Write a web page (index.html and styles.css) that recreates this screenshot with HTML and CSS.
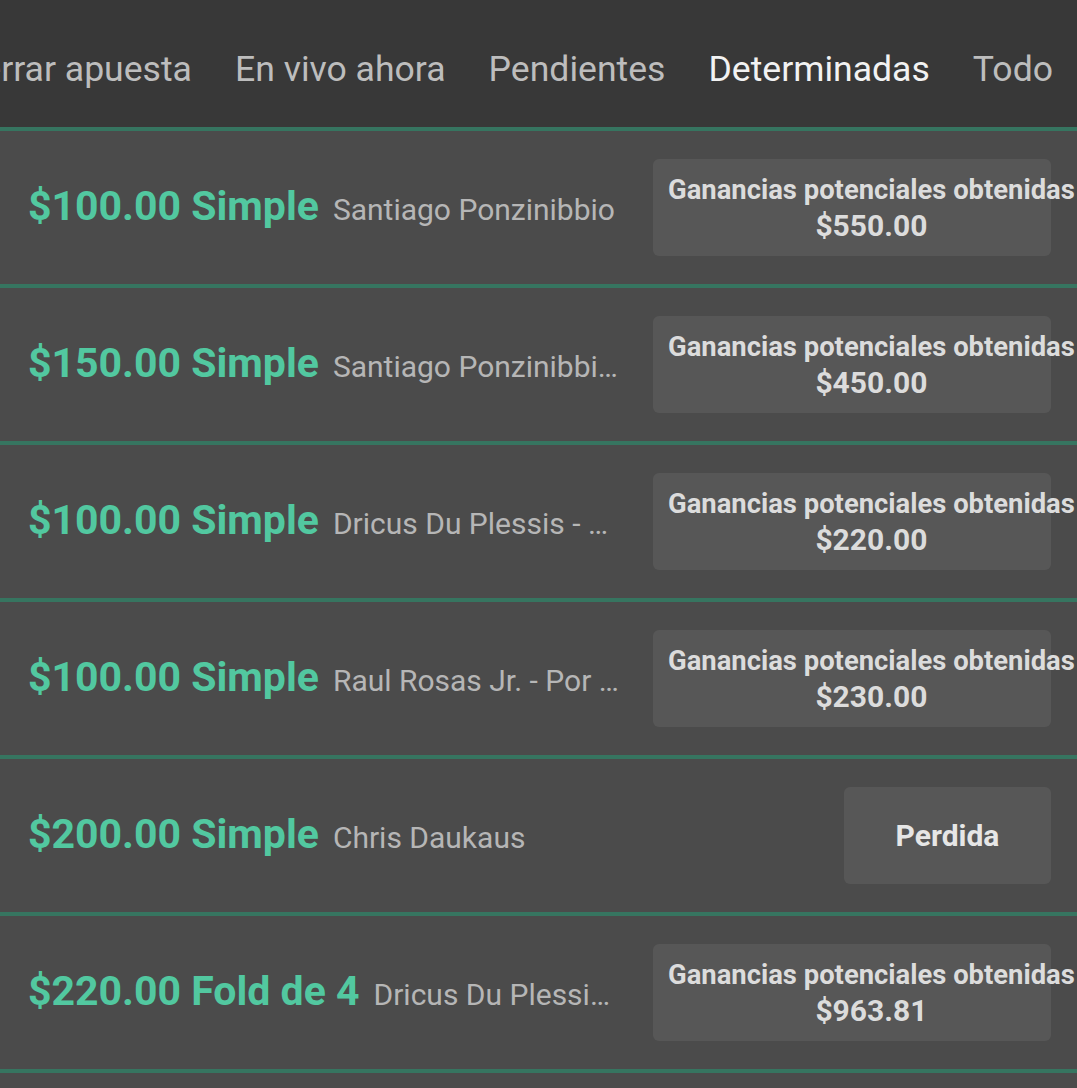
FILE: index.html
```html
<!DOCTYPE html>
<html lang="es">
<head>
    <meta charset="UTF-8">
    <meta name="viewport" content="width=device-width, initial-scale=1.0">
    <title>Mis apuestas - Determinadas</title>
    <link rel="stylesheet" href="styles.css">
</head>
<body>
    <nav class="tabs">
        <a class="tab">Cerrar apuesta</a>
        <a class="tab">En vivo ahora</a>
        <a class="tab">Pendientes</a>
        <a class="tab active">Determinadas</a>
        <a class="tab">Todo</a>
    </nav>

    <div class="bet-list">
        <div class="bet-row">
            <div class="bet-title">
                <span class="bet-stake">$100.00 Simple</span>
                <span class="bet-desc">Santiago Ponzinibbio</span>
            </div>
            <div class="payout">
                <div class="payout-inner">
                    <div class="payout-label">Ganancias potenciales obtenidas</div>
                    <div class="payout-value">$550.00</div>
                </div>
            </div>
        </div>

        <div class="bet-row">
            <div class="bet-title">
                <span class="bet-stake">$150.00 Simple</span>
                <span class="bet-desc">Santiago Ponzinibbio - Por KO/TKO</span>
            </div>
            <div class="payout">
                <div class="payout-inner">
                    <div class="payout-label">Ganancias potenciales obtenidas</div>
                    <div class="payout-value">$450.00</div>
                </div>
            </div>
        </div>

        <div class="bet-row">
            <div class="bet-title">
                <span class="bet-stake">$100.00 Simple</span>
                <span class="bet-desc">Dricus Du Plessis - Por KO/TKO</span>
            </div>
            <div class="payout">
                <div class="payout-inner">
                    <div class="payout-label">Ganancias potenciales obtenidas</div>
                    <div class="payout-value">$220.00</div>
                </div>
            </div>
        </div>

        <div class="bet-row">
            <div class="bet-title">
                <span class="bet-stake">$100.00 Simple</span>
                <span class="bet-desc">Raul Rosas Jr. - Por sumisión</span>
            </div>
            <div class="payout">
                <div class="payout-inner">
                    <div class="payout-label">Ganancias potenciales obtenidas</div>
                    <div class="payout-value">$230.00</div>
                </div>
            </div>
        </div>

        <div class="bet-row">
            <div class="bet-title">
                <span class="bet-stake">$200.00 Simple</span>
                <span class="bet-desc">Chris Daukaus</span>
            </div>
            <div class="payout payout-lost">
                <div class="payout-inner">
                    <div class="payout-result">Perdida</div>
                </div>
            </div>
        </div>

        <div class="bet-row">
            <div class="bet-title">
                <span class="bet-stake">$220.00 Fold de 4</span>
                <span class="bet-desc">Dricus Du Plessis, Santiago Ponzinibbio</span>
            </div>
            <div class="payout">
                <div class="payout-inner">
                    <div class="payout-label">Ganancias potenciales obtenidas</div>
                    <div class="payout-value">$963.81</div>
                </div>
            </div>
        </div>

        <div class="bet-row"></div>
    </div>
</body>
</html>
```

FILE: styles.css
```css
body {
    margin: 0;
    font-family: Roboto, "Liberation Sans", sans-serif;
    background: #4b4b4b;
    height: 1088px;
    overflow: hidden;
}

.tabs {
    display: flex;
    justify-content: flex-end;
    align-items: center;
    gap: 43px;
    height: 127px;
    padding-right: 24px;
    background: #383838;
    border-bottom: 4px solid #367560;
    overflow: hidden;
}
.tab {
    position: relative;
    flex-shrink: 0;
    font-size: 35.6px;
    color: #bdbdbd;
    white-space: nowrap;
    padding-top: 10px;
}
.tab.active {
    color: #f2f2f2;
}
.tab.active::after {
    content: "";
    position: absolute;
    left: 2px;
    right: 0;
    bottom: -45px;
    height: 5px;
    background: #2b2b2b;
}

.bet-row {
    display: flex;
    align-items: center;
    gap: 32px;
    height: 153px;
    padding: 0 26px 0 28px;
    border-bottom: 4px solid #367560;
}

.bet-title {
    flex: 1;
    min-width: 0;
    display: flex;
    align-items: baseline;
    gap: 14px;
    white-space: nowrap;
    margin-top: -3px;
}
.bet-stake {
    flex-shrink: 0;
    font-size: 41px;
    font-weight: bold;
    color: #52c8a0;
}
.bet-desc {
    min-width: 0;
    overflow: hidden;
    text-overflow: ellipsis;
    font-size: 30px;
    color: #b6b6b6;
}

.payout {
    flex-shrink: 0;
    width: 398px;
    height: 97px;
    box-sizing: border-box;
    padding: 0 15px;
    display: flex;
    align-items: center;
    background: #575757;
    border-radius: 6px;
    color: #dcdcdc;
    font-weight: bold;
}
.payout-lost {
    width: 207px;
}
.payout-inner {
    flex-shrink: 0;
    width: max-content;
    min-width: 100%;
    text-align: center;
    white-space: nowrap;
    line-height: 35px;
}
.payout-label {
    font-size: 27.4px;
}
.payout-value {
    font-size: 30px;
}
.payout-result {
    font-size: 30px;
    color: #e6e6e6;
}
```
